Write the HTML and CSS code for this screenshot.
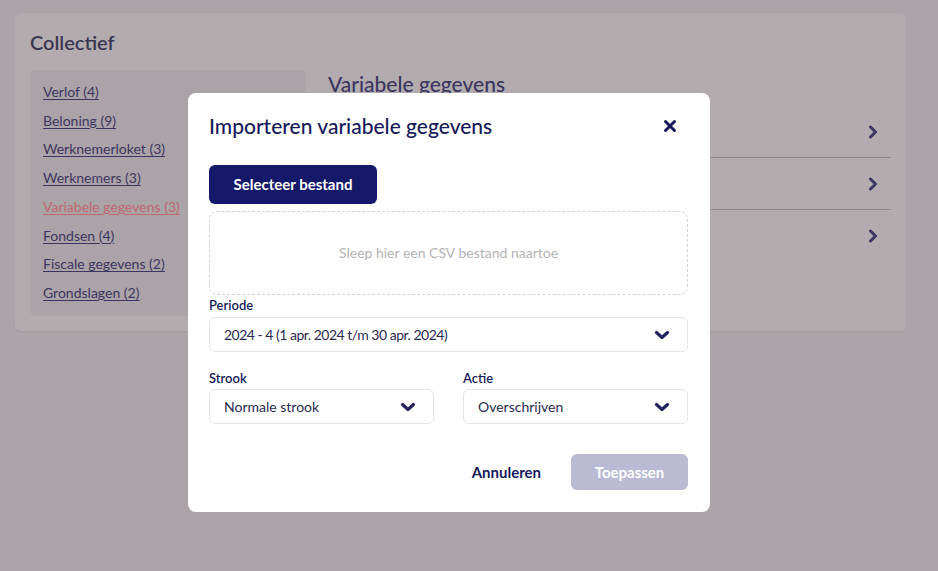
FILE: index.html
```html
<!DOCTYPE html>
<html lang="nl">
<head>
<meta charset="utf-8">
<title>Collectief</title>
<link rel="stylesheet" href="styles.css">
</head>
<body>
<main class="page">
  <section class="card">
    <h1 class="card-title">Collectief</h1>
    <div class="card-body">
      <nav class="side">
        <a href="#">Verlof (4)</a>
        <a href="#">Beloning (9)</a>
        <a href="#">Werknemerloket (3)</a>
        <a href="#">Werknemers (3)</a>
        <a href="#" class="active">Variabele gegevens (3)</a>
        <a href="#">Fondsen (4)</a>
        <a href="#">Fiscale gegevens (2)</a>
        <a href="#">Grondslagen (2)</a>
      </nav>
      <div class="content">
        <h2 class="content-title">Variabele gegevens</h2>
        <ul class="rows">
          <li class="row"><svg class="chev-r" viewBox="0 0 10 14"><path d="M2.5 2 L7.5 7 L2.5 12" fill="none" stroke="currentColor" stroke-width="3" stroke-linecap="round" stroke-linejoin="round"/></svg></li>
          <li class="row"><svg class="chev-r" viewBox="0 0 10 14"><path d="M2.5 2 L7.5 7 L2.5 12" fill="none" stroke="currentColor" stroke-width="3" stroke-linecap="round" stroke-linejoin="round"/></svg></li>
          <li class="row"><svg class="chev-r" viewBox="0 0 10 14"><path d="M2.5 2 L7.5 7 L2.5 12" fill="none" stroke="currentColor" stroke-width="3" stroke-linecap="round" stroke-linejoin="round"/></svg></li>
        </ul>
      </div>
    </div>
  </section>
</main>

<div class="modal" role="dialog" aria-label="Importeren variabele gegevens">
  <div class="modal-head">
    <h3 class="modal-title">Importeren variabele gegevens</h3>
    <button class="close" aria-label="Sluiten"><svg viewBox="0 0 14 14"><path d="M2.5 2.5 L11.5 11.5 M11.5 2.5 L2.5 11.5" fill="none" stroke="currentColor" stroke-width="3" stroke-linecap="round"/></svg></button>
  </div>
  <button class="btn-primary">Selecteer bestand</button>
  <div class="dropzone">Sleep hier een CSV bestand naartoe</div>
  <label class="field field-periode">
    <span class="label">Periode</span>
    <span class="select"><span class="tight">2024 - 4 (1 apr. 2024 t/m 30 apr. 2024)</span><svg class="chev-d" viewBox="0 0 16 10"><path d="M2.5 2.5 L8 7.5 L13.5 2.5" fill="none" stroke="currentColor" stroke-width="3.2" stroke-linecap="round" stroke-linejoin="round"/></svg></span>
  </label>
  <div class="two">
    <label class="field">
      <span class="label">Strook</span>
      <span class="select"><span>Normale strook</span><svg class="chev-d" viewBox="0 0 16 10"><path d="M2.5 2.5 L8 7.5 L13.5 2.5" fill="none" stroke="currentColor" stroke-width="3.2" stroke-linecap="round" stroke-linejoin="round"/></svg></span>
    </label>
    <label class="field">
      <span class="label">Actie</span>
      <span class="select"><span>Overschrijven</span><svg class="chev-d" viewBox="0 0 16 10"><path d="M2.5 2.5 L8 7.5 L13.5 2.5" fill="none" stroke="currentColor" stroke-width="3.2" stroke-linecap="round" stroke-linejoin="round"/></svg></span>
    </label>
  </div>
  <div class="actions">
    <button class="btn-link">Annuleren</button>
    <button class="btn-disabled" disabled>Toepassen</button>
  </div>
</div>
</body>
</html>
```
FILE: styles.css
```css
* { box-sizing: border-box; }
html, body { margin: 0; padding: 0; }
body {
  background: #aba4a8;
  font-family: "Source Sans Pro", Lato, "Noto Sans", sans-serif;
  color: #3b3760;
  width: 938px;
  height: 571px;
  overflow: hidden;
  position: relative;
}
.page { padding: 13px 32px 0 15px; }
.card {
  background: #b2acaf;
  border-radius: 6px;
  padding: 16px 15px 15px 15px;
  box-shadow: 0 1px 2px rgba(0,0,0,0.05);
}
.card-title {
  margin: 0 0 15px 0;
  font-size: 20px;
  font-weight: 600;
  line-height: 26px;
  color: #3a3752;
}
.card-body { display: flex; gap: 22px; }
.side {
  width: 276px;
  background: #aaa3a7;
  border-radius: 6px;
  padding: 8px 13px 8px 13px;
  display: flex;
  flex-direction: column;
}
.side a {
  font-size: 14px;
  line-height: 28.7px;
  color: #3c3762;
  text-decoration: underline;
  text-underline-offset: 2px;
  text-decoration-thickness: 1px;
}
.side a.active { color: #c1686f; }
.content { flex: 1; }
.content-title {
  margin: 1px 0 0 0;
  font-size: 21px;
  font-weight: 500;
  line-height: 26px;
  color: #3b3760;
}
.rows { list-style: none; margin: 9px 0 0 0; padding: 0; }
.row {
  height: 52px;
  border-bottom: 1px solid #8f898d;
  display: flex;
  justify-content: flex-end;
  align-items: center;
  padding-right: 13px;
}
.row:last-child { border-bottom: none; }
.chev-r { width: 10px; height: 14px; color: #3b3765; }

.modal {
  position: absolute;
  left: 188px;
  top: 93px;
  width: 522px;
  height: 419px;
  background: #fff;
  border-radius: 8px;
  padding: 18px 22px 22px 21px;
  display: flex;
  flex-direction: column;
}
.modal-head { display: flex; justify-content: space-between; align-items: center; height: 30px; }
.modal-title {
  margin: 0;
  font-size: 21px;
  font-weight: 500;
  color: #161a5a;
}
.close {
  border: none; background: none; padding: 0;
  width: 14px; height: 14px; margin-right: 11px; margin-top: 1px;
  color: #161a5a;
}
.close svg { width: 14px; height: 14px; display: block; }
.btn-primary {
  margin-top: 24px;
  align-self: flex-start;
  height: 39px;
  width: 168px;
  border: none;
  border-radius: 6px;
  background: #16196a;
  color: #fff;
  font-family: inherit;
  font-size: 15px;
  font-weight: 700;
}
.dropzone {
  margin-top: 7px;
  height: 85px;
  border: 1px dashed #d3d3d3;
  border-radius: 8px;
  display: flex;
  align-items: center;
  justify-content: center;
  font-size: 14px;
  color: #b3b3b3;
}
.field { display: flex; flex-direction: column; }
.label {
  font-size: 13px;
  font-weight: 600;
  color: #161a5a;
  line-height: 18px;
  margin-top: 1px;
  margin-bottom: 3px;
}
.select {
  height: 35px;
  border: 1px solid #e4e4e8;
  border-radius: 6px;
  display: flex;
  align-items: center;
  justify-content: space-between;
  padding: 0 17px 0 14px;
  font-size: 14px;
  color: #2a2a50;
}
.tight { letter-spacing: -0.5px; }
.chev-d { width: 16px; height: 10px; color: #23235e; }
.two {
  margin-top: 16px;
  display: grid;
  grid-template-columns: 1fr 1fr;
  gap: 29px;
}
.two .label { margin-bottom: 2px; }
.actions {
  margin-top: 30px;
  display: flex;
  justify-content: flex-end;
  align-items: center;
  gap: 30px;
}
.btn-link {
  border: none; background: none; padding: 0;
  font-family: inherit; font-size: 15px; font-weight: 700;
  color: #161a5a;
}
.btn-disabled {
  height: 36px; width: 117px;
  border: none; border-radius: 6px;
  background: #babad4;
  color: #fff;
  font-family: inherit; font-size: 15px; font-weight: 700;
}
```
